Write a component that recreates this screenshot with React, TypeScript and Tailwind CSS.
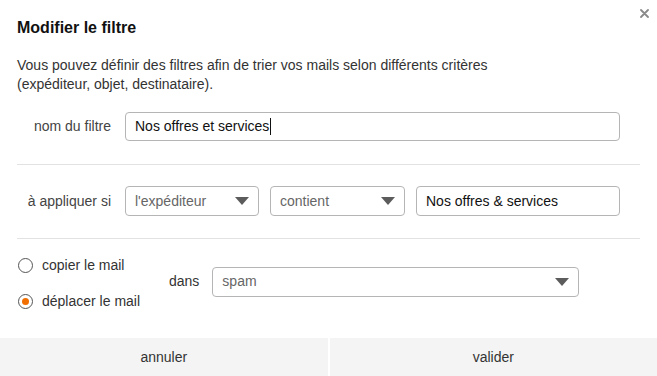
import { useState } from 'react';

function Caret() {
  return (
    <svg width="14" height="8" viewBox="0 0 14 8" className="shrink-0">
      <path d="M0 0 H14 L7 8 Z" fill="#5c5c5c" />
    </svg>
  );
}

function FakeSelect({ value, className }: { value: string; className: string }) {
  return (
    <div
      className={`flex h-[30px] items-center justify-between rounded-[4px] border border-[#b5b5b5] bg-white pl-[9px] pr-[9px] text-[14px] text-[#666] ${className}`}
    >
      <span>{value}</span>
      <Caret />
    </div>
  );
}

function Radio({ checked, label, onClick }: { checked: boolean; label: string; onClick: () => void }) {
  return (
    <button type="button" onClick={onClick} className="flex items-center gap-[9px] text-[14px] text-[#333]">
      <span className="flex h-[15px] w-[15px] items-center justify-center rounded-full border border-[#555] bg-white">
        {checked && <span className="h-[7px] w-[7px] rounded-full bg-[#f16e00]" />}
      </span>
      {label}
    </button>
  );
}

export default function App() {
  const [mode, setMode] = useState<'copy' | 'move'>('move');

  return (
    <div
      className="relative flex h-[376px] w-[657px] flex-col bg-white text-[#333]"
      style={{ fontFamily: '"Liberation Sans", Arial, sans-serif' }}
    >
      <button type="button" aria-label="fermer" className="absolute right-[8px] top-[9px]">
        <svg width="9" height="9" viewBox="0 0 9 9">
          <path d="M1 1 L8 8 M8 1 L1 8" stroke="#8a8a8a" strokeWidth="1.8" strokeLinecap="round" />
        </svg>
      </button>

      <div className="flex-1 pl-[17px] pr-[17px] pt-[18px]">
        <h1 className="text-[16px] font-bold leading-[20px] text-[#111]">Modifier le filtre</h1>
        <p className="mt-[18px] text-[14px] leading-[19px] text-[#333]">
          Vous pouvez définir des filtres afin de trier vos mails selon différents critères
          <br />
          (expéditeur, objet, destinataire).
        </p>

        <div className="mt-[18px] flex items-center gap-[14px] pr-[20px]">
          <label className="w-[94px] text-right text-[14px] text-[#444]">nom du filtre</label>
          <div className="flex h-[29px] flex-1 items-center rounded-[4px] border border-[#b5b5b5] px-[9px] text-[14px] text-[#111]">
            Nos offres et services
            <span className="ml-[1px] h-[17px] w-[1px] bg-[#111]" />
          </div>
        </div>

        <div className="mt-[23px] border-t border-[#e2e2e2]" />

        <div className="mt-[21px] flex items-center gap-[14px] pr-[20px]">
          <label className="w-[94px] text-right text-[14px] text-[#444]">à appliquer si</label>
          <div className="flex flex-1 items-center gap-[11px]">
            <FakeSelect value="l'expéditeur" className="w-[134px]" />
            <FakeSelect value="contient" className="w-[135px]" />
            <div className="flex h-[30px] flex-1 items-center rounded-[4px] border border-[#b5b5b5] px-[9px] text-[14px] text-[#111]">
              Nos offres &amp; services
            </div>
          </div>
        </div>

        <div className="mt-[22px] border-t border-[#e2e2e2]" />

        <div className="mt-[16px] flex items-center">
          <div className="flex w-[132px] flex-col items-start gap-[15px] pl-[1px]">
            <Radio checked={mode === 'copy'} label="copier le mail" onClick={() => setMode('copy')} />
            <Radio checked={mode === 'move'} label="déplacer le mail" onClick={() => setMode('move')} />
          </div>
          <span className="mb-[4px] ml-[20px] text-[14px] text-[#333]">dans</span>
          <FakeSelect value="spam" className="mb-[4px] ml-[13px] w-[367px]" />
        </div>
      </div>

      <div className="flex h-[38px] bg-[#f4f4f4] text-[14px] text-[#333]">
        <button type="button" className="flex-1 border-r-2 border-white">annuler</button>
        <button type="button" className="flex-1">valider</button>
      </div>
    </div>
  );
}
